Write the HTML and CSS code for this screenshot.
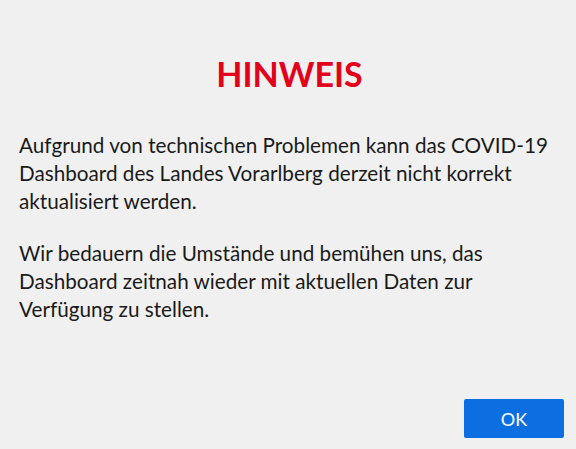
FILE: index.html
```html
<!DOCTYPE html>
<html lang="de">
<head>
  <meta charset="UTF-8" />
  <title>Hinweis</title>
  <link rel="stylesheet" href="styles.css">
</head>
<body>
  <div class="notice">
    <h1 class="notice-title">HINWEIS</h1>
    <p>Aufgrund von technischen Problemen kann das COVID-19 Dashboard des Landes Vorarlberg derzeit nicht korrekt aktualisiert werden.</p>
    <p>Wir bedauern die Umstände und bemühen uns, das Dashboard zeitnah wieder mit aktuellen Daten zur Verfügung zu stellen.</p>
    <div class="notice-footer">
      <button class="ok-button">OK</button>
    </div>
  </div>
</body>
</html>
```

FILE: styles.css
```css
html, body {
  margin: 0;
  height: 100%;
}

body {
  background: #f0f0f0;
  font-family: Lato, "Open Sans", sans-serif;
  color: #1a1a1a;
}

.notice {
  height: 100%;
  box-sizing: border-box;
  padding: 52px 12px 11px 19px;
  display: flex;
  flex-direction: column;
}

.notice-title {
  margin: 0 0 35px;
  padding-right: 4px;
  text-align: center;
  font-size: 34px;
  font-weight: bold;
  color: #e3001b;
  line-height: 44px;
}

.notice p {
  margin: 0 8px 24px 0;
  font-size: 20.7px;
  line-height: 28px;
}

.notice-footer {
  margin-top: auto;
  display: flex;
  justify-content: flex-end;
}

.ok-button {
  width: 100px;
  height: 39px;
  border: none;
  border-radius: 2px;
  background: #0b6fe2;
  color: #fff;
  font-family: inherit;
  font-size: 18px;
  cursor: pointer;
}
```
